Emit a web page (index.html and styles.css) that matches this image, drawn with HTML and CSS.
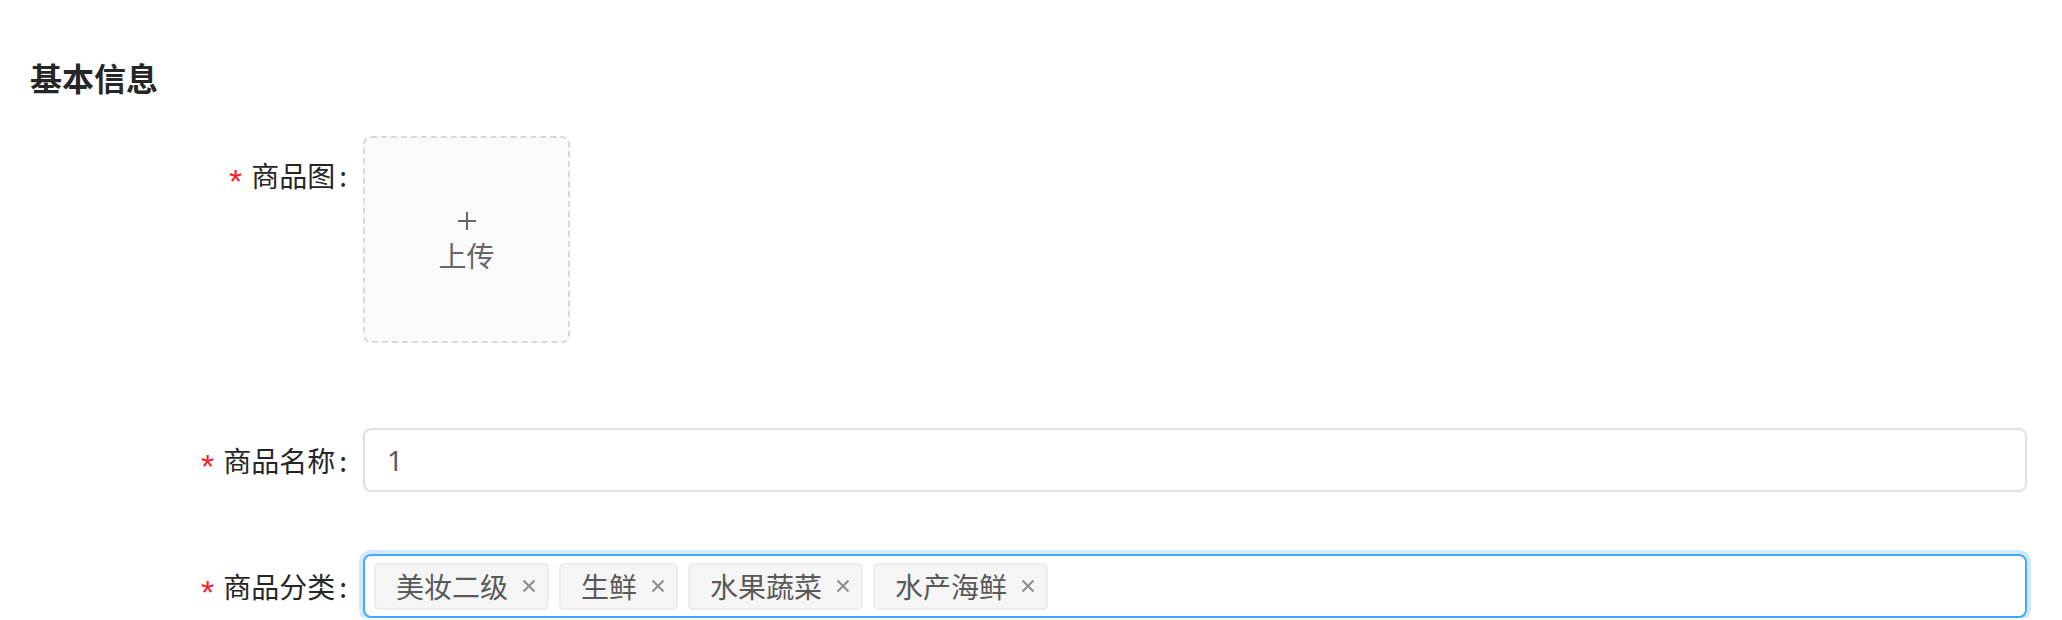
FILE: index.html
```html
<!DOCTYPE html>
<html lang="zh-CN">
<head>
<meta charset="utf-8">
<title>基本信息</title>
<link rel="stylesheet" href="styles.css">
</head>
<body>
<div class="page">
  <h2 class="title">基本信息</h2>
  <form class="form">
    <div class="row row-upload">
      <label class="label label-upload"><span class="req">*</span>商品图<span class="colon">:</span></label>
      <div class="control">
        <div class="upload">
          <svg class="plus" width="20" height="20" viewBox="0 0 20 20"><path d="M10 1v18M1 10h18" stroke="#666" stroke-width="2" fill="none"/></svg>
          <span class="upload-text">上传</span>
        </div>
      </div>
    </div>
    <div class="row row-input">
      <label class="label"><span class="req">*</span>商品名称<span class="colon">:</span></label>
      <div class="control">
        <div class="input">1</div>
      </div>
    </div>
    <div class="row">
      <label class="label"><span class="req">*</span>商品分类<span class="colon">:</span></label>
      <div class="control">
        <div class="select">
          <span class="tag">美妆二级<svg class="close" width="14" height="14" viewBox="0 0 14 14"><path d="M1.5 1.5l11 11M12.5 1.5l-11 11" stroke="#8c8c8c" stroke-width="2" fill="none"/></svg></span>
          <span class="tag">生鲜<svg class="close" width="14" height="14" viewBox="0 0 14 14"><path d="M1.5 1.5l11 11M12.5 1.5l-11 11" stroke="#8c8c8c" stroke-width="2" fill="none"/></svg></span>
          <span class="tag">水果蔬菜<svg class="close" width="14" height="14" viewBox="0 0 14 14"><path d="M1.5 1.5l11 11M12.5 1.5l-11 11" stroke="#8c8c8c" stroke-width="2" fill="none"/></svg></span>
          <span class="tag">水产海鲜<svg class="close" width="14" height="14" viewBox="0 0 14 14"><path d="M1.5 1.5l11 11M12.5 1.5l-11 11" stroke="#8c8c8c" stroke-width="2" fill="none"/></svg></span>
        </div>
      </div>
    </div>
  </form>
</div>
</body>
</html>
```

FILE: styles.css
```css
* { box-sizing: border-box; }
html, body { margin: 0; padding: 0; background: #fff; }
body {
  font-family: "Noto Sans CJK SC", "Noto Sans", sans-serif;
  color: #262626;
  overflow: hidden;
}
.page {
  padding: 53px 35px 0 0;
}
.title {
  margin: 0 0 35px 30px;
  font-size: 32px;
  line-height: 48px;
  font-weight: 700;
  color: #262626;
}
.form { margin: 0; }
.row {
  display: grid;
  grid-template-columns: 363px 1fr;
  align-items: start;
}
.row-upload { margin-bottom: 85px; }
.row-input { margin-bottom: 62px; }
.label {
  text-align: right;
  font-size: 28px;
  line-height: 64px;
  color: #262626;
  white-space: nowrap;
}
.label-upload { line-height: 78px; }
.req {
  color: #f5222d;
  margin-right: 9px;
  font-family: "Liberation Sans", sans-serif;
  font-size: 34px;
  vertical-align: -6px;
  line-height: 1;
}
.colon {
  margin: 0 16px 0 4px;
}
.control { min-width: 0; }
.upload {
  width: 207px;
  height: 207px;
  border: 2px dashed #d9d9d9;
  border-radius: 8px;
  background: #fafafa;
  display: flex;
  flex-direction: column;
  align-items: center;
  justify-content: center;
  gap: 10px;
  color: #666;
}
.plus { display: block; }
.upload-text {
  font-size: 28px;
  line-height: 28px;
}
.input {
  height: 64px;
  border: 2px solid #e0e0e0;
  border-radius: 8px;
  padding: 0 22px;
  font-size: 28px;
  line-height: 60px;
  color: #595959;
  font-family: "Noto Sans", "Noto Sans CJK SC", sans-serif;
}
.select {
  height: 64px;
  border: 2px solid #40a9ff;
  border-radius: 8px;
  box-shadow: 0 0 0 4px rgba(24, 144, 255, 0.2);
  padding: 6px 9px;
  display: flex;
  align-items: center;
  gap: 10px;
}
.tag {
  display: inline-flex;
  align-items: center;
  height: 47px;
  padding: 0 11px 0 20px;
  background: #f5f5f5;
  border: 2px solid #ededed;
  border-radius: 5px;
  font-size: 28px;
  line-height: 43px;
  color: #595959;
  white-space: nowrap;
}
.close {
  margin-left: 14px;
  display: block;
}
```
